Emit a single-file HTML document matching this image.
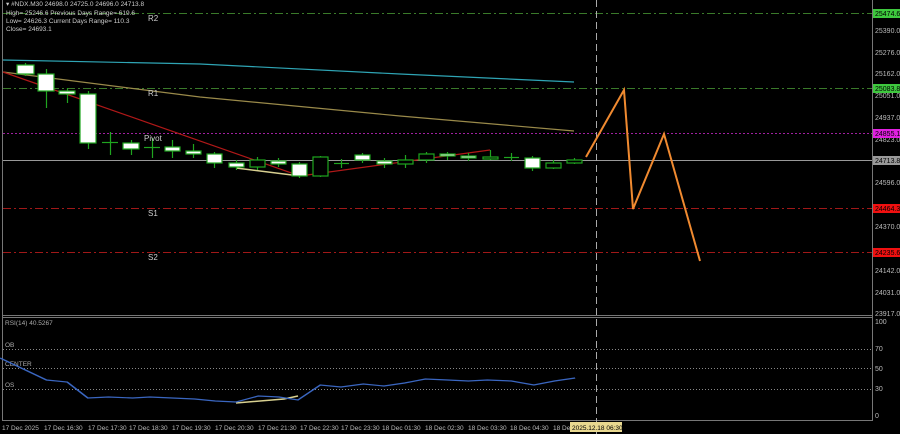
<!DOCTYPE html>
<html><head><meta charset="utf-8"><style>
html,body{margin:0;padding:0;background:#000;width:900px;height:434px;overflow:hidden}
svg{display:block}
text{font-family:"Liberation Sans",sans-serif}
</style></head><body>
<svg width="900" height="434" viewBox="0 0 900 434" xmlns="http://www.w3.org/2000/svg">
<rect width="900" height="434" fill="#000"/>
<line x1="2.5" y1="0" x2="2.5" y2="420" stroke="#777" stroke-width="1"/>
<line x1="872.5" y1="0" x2="872.5" y2="420" stroke="#777"/>
<line x1="2" y1="315.5" x2="873" y2="315.5" stroke="#777"/>
<line x1="2" y1="317.5" x2="873" y2="317.5" stroke="#777"/>
<line x1="2" y1="420.5" x2="873" y2="420.5" stroke="#777"/>
<g stroke-width="1" fill="none">
<line x1="3" y1="13.5" x2="872" y2="13.5" stroke="#3a7a2a" stroke-dasharray="8,3,2,3"/>
<line x1="3" y1="88.5" x2="872" y2="88.5" stroke="#3a7a2a" stroke-dasharray="8,3,2,3"/>
<line x1="3" y1="133.5" x2="872" y2="133.5" stroke="#a020a0" stroke-dasharray="2,2"/>
<line x1="3" y1="160.5" x2="872" y2="160.5" stroke="#999"/>
<line x1="3" y1="208.5" x2="872" y2="208.5" stroke="#a01818" stroke-dasharray="8,3,2,3"/>
<line x1="3" y1="252.5" x2="872" y2="252.5" stroke="#a01818" stroke-dasharray="8,3,2,3"/>
<line x1="596.5" y1="0" x2="596.5" y2="434" stroke="#aaa" stroke-dasharray="7,4"/>
</g>
<polyline points="3,60 200,64 400,74 574,82" stroke="#2fa5b5" stroke-width="1.2" fill="none"/>
<polyline points="3,72 200,97 400,116 574,131" stroke="#9a8a4a" stroke-width="1.2" fill="none"/>
<polyline points="3,72 300,176 490,150" stroke="#b01818" stroke-width="1.2" fill="none"/>
<polyline points="236,168 300,176" stroke="#d8d090" stroke-width="1.5" fill="none"/>
<g stroke="#1fa51f" stroke-width="1.2">
<line x1="25.5" y1="63" x2="25.5" y2="76"/><rect x="17" y="65" width="17" height="9" fill="#fff"/>
<line x1="46.5" y1="69" x2="46.5" y2="108"/><rect x="38" y="74" width="16" height="17" fill="#fff"/>
<line x1="67.5" y1="88" x2="67.5" y2="103"/><rect x="59" y="91" width="16" height="3" fill="#fff"/>
<line x1="88.5" y1="91" x2="88.5" y2="149"/><rect x="80" y="94" width="16" height="49" fill="#fff"/>
<line x1="110.5" y1="132" x2="110.5" y2="155"/><line x1="102" y1="142.5" x2="118" y2="142.5"/>
<line x1="131.5" y1="140" x2="131.5" y2="155"/><rect x="123" y="143" width="16" height="6" fill="#fff"/>
<line x1="152.5" y1="138" x2="152.5" y2="158"/><line x1="144" y1="147.5" x2="160" y2="147.5"/>
<line x1="172.5" y1="140" x2="172.5" y2="158"/><rect x="165" y="147" width="15" height="4" fill="#fff"/>
<line x1="193.5" y1="144" x2="193.5" y2="158"/><rect x="186" y="151" width="15" height="3" fill="#fff"/>
<line x1="214.5" y1="152" x2="214.5" y2="168"/><rect x="207" y="154" width="15" height="9" fill="#fff"/>
<line x1="236.5" y1="160" x2="236.5" y2="170"/><rect x="229" y="163" width="15" height="4" fill="#fff"/>
<line x1="257.5" y1="157" x2="257.5" y2="170"/><rect x="250" y="160" width="15" height="7" fill="#000"/>
<line x1="278.5" y1="158" x2="278.5" y2="167"/><rect x="271" y="161" width="15" height="3" fill="#fff"/>
<line x1="299.5" y1="162" x2="299.5" y2="178"/><rect x="292" y="164" width="15" height="12" fill="#fff"/>
<line x1="320.5" y1="156" x2="320.5" y2="177"/><rect x="313" y="157" width="15" height="19" fill="#000"/>
<line x1="341.5" y1="159" x2="341.5" y2="168"/><line x1="334" y1="163.5" x2="349" y2="163.5"/>
<line x1="362.5" y1="153" x2="362.5" y2="163"/><rect x="355" y="155" width="15" height="5" fill="#fff"/>
<line x1="384.5" y1="158" x2="384.5" y2="168"/><rect x="377" y="161" width="15" height="3" fill="#fff"/>
<line x1="405.5" y1="155" x2="405.5" y2="168"/><rect x="398" y="160" width="15" height="4" fill="#000"/>
<line x1="426.5" y1="152" x2="426.5" y2="163"/><rect x="419" y="154" width="15" height="6" fill="#000"/>
<line x1="447.5" y1="152" x2="447.5" y2="160"/><rect x="440" y="154" width="15" height="2" fill="#fff"/>
<line x1="468.5" y1="153" x2="468.5" y2="161"/><rect x="461" y="156" width="15" height="2" fill="#fff"/>
<line x1="490.5" y1="150" x2="490.5" y2="160"/><rect x="483" y="157" width="15" height="2" fill="#000"/>
<line x1="511.5" y1="153" x2="511.5" y2="161"/><line x1="504" y1="157.5" x2="519" y2="157.5"/>
<line x1="532.5" y1="156" x2="532.5" y2="171"/><rect x="525" y="158" width="15" height="10" fill="#fff"/>
<line x1="553.5" y1="160" x2="553.5" y2="169"/><rect x="546" y="163" width="15" height="5" fill="#000"/>
<line x1="574.5" y1="158" x2="574.5" y2="164"/><rect x="567" y="160" width="15" height="3" fill="#000"/>
</g>
<polyline points="586,157 624,90 633,209 664,134 700,261" stroke="#f08a30" stroke-width="2" fill="none"/>
<g fill="#ccc" font-size="6.5">
<text x="6" y="6">▾ #NDX.M30  24698.0 24725.0 24696.0 24713.8</text>
<text x="6" y="15">High= 25246.6   Previous Days Range= 619.6</text>
<text x="6" y="23">Low= 24626.3   Current Days Range= 110.3</text>
<text x="6" y="31">Close= 24693.1</text>
<text x="148" y="21" font-size="8">R2</text>
<text x="148" y="96" font-size="8">R1</text>
<text x="144" y="141" font-size="8">Pivot</text>
<text x="148" y="216" font-size="8">S1</text>
<text x="148" y="260" font-size="8">S2</text>
</g>
<g fill="#bbb" font-size="7">
<text x="875" y="33">25390.0</text>
<text x="875" y="55">25276.0</text>
<text x="875" y="76">25162.0</text>
<text x="875" y="98">25051.0</text>
<text x="875" y="120">24937.0</text>
<text x="875" y="142">24823.0</text>
<text x="875" y="185">24596.0</text>
<text x="875" y="229">24370.0</text>
<text x="875" y="273">24142.0</text>
<text x="875" y="295">24031.0</text>
<text x="875" y="316">23917.0</text>
<text x="875" y="324">100</text>
<text x="875" y="351">70</text>
<text x="875" y="371">50</text>
<text x="875" y="391">30</text>
<text x="875" y="418">0</text>
</g>
<rect x="873" y="9" width="27" height="9" fill="#3ec83e"/><text x="875" y="16" font-size="7" fill="#000">25474.6</text>
<rect x="873" y="84" width="27" height="9" fill="#3ec83e"/><text x="875" y="91" font-size="7" fill="#000">25083.8</text>
<rect x="873" y="129" width="27" height="9" fill="#e020e0"/><text x="875" y="136" font-size="7" fill="#000">24855.1</text>
<rect x="873" y="156" width="27" height="9" fill="#999"/><text x="875" y="163" font-size="7" fill="#000">24713.8</text>
<rect x="873" y="204" width="27" height="9" fill="#f01010"/><text x="875" y="211" font-size="7" fill="#000">24464.3</text>
<rect x="873" y="248" width="27" height="9" fill="#f01010"/><text x="875" y="255" font-size="7" fill="#000">24235.6</text>
<g stroke="#888" stroke-dasharray="1,2" fill="none">
<line x1="3" y1="349.5" x2="872" y2="349.5"/>
<line x1="3" y1="368.5" x2="872" y2="368.5"/>
<line x1="3" y1="389.5" x2="872" y2="389.5"/>
</g>
<g fill="#aaa" font-size="6.5">
<text x="5" y="325">RSI(14) 40.5267</text>
<text x="5" y="347">OB</text>
<text x="5" y="366">CENTER</text>
<text x="5" y="387">OS</text>
</g>
<polyline points="236,403 284,399 298,396" stroke="#d8d090" stroke-width="1.5" fill="none"/>
<polyline points="0,358 27,380 39,382 51,398 63,397 77,398 87,397 100,398 113,399 125,401 137,402 150,396 162,397 173,400 186,385 198,387 211,384 223,386 235,383 247,379 260,380 272,381 283,380 297,381 310,385 322,381 334,378" stroke="#3a66c0" stroke-width="1.2" fill="none" transform="scale(1.722,1)"/>
<g fill="#bbb" font-size="6.5">
<text x="2" y="430">17 Dec 2025</text>
<text x="44" y="430">17 Dec 16:30</text>
<text x="88" y="430">17 Dec 17:30</text>
<text x="129" y="430">17 Dec 18:30</text>
<text x="172" y="430">17 Dec 19:30</text>
<text x="215" y="430">17 Dec 20:30</text>
<text x="258" y="430">17 Dec 21:30</text>
<text x="300" y="430">17 Dec 22:30</text>
<text x="341" y="430">17 Dec 23:30</text>
<text x="382" y="430">18 Dec 01:30</text>
<text x="425" y="430">18 Dec 02:30</text>
<text x="468" y="430">18 Dec 03:30</text>
<text x="510" y="430">18 Dec 04:30</text>
<text x="553" y="430">18 De</text>
</g>
<rect x="570" y="422" width="52" height="10" fill="#e8d890"/>
<text x="572" y="430" font-size="6.5" fill="#000">2025.12.18 06:30</text>
</svg>
</body></html>
